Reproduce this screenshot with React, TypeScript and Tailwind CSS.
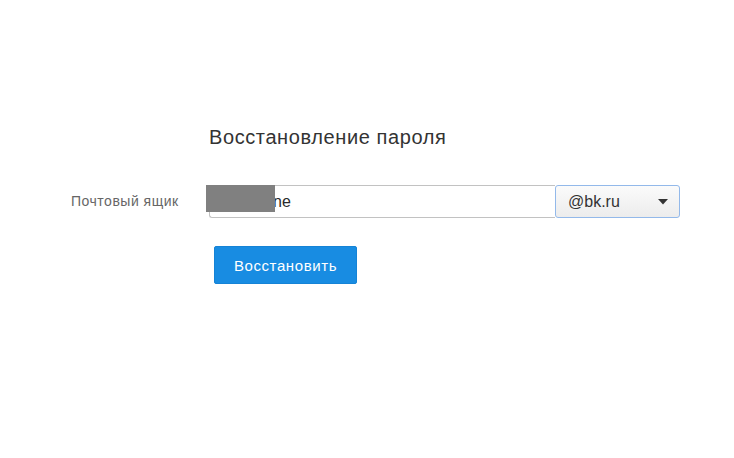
export default function App() {
  return (
    <div
      className="w-[734px] h-[458px] bg-white relative"
      style={{ fontFamily: '"Liberation Sans", Arial, sans-serif' }}
    >
      <div className="pt-[125px]">
        <div className="pl-[209px] text-[20px] leading-[24px] tracking-[0.6px] text-[#333333]">
          Восстановление пароля
        </div>
        <div className="flex items-center mt-[36px]">
          <div className="w-[209px] pl-[71px] text-[14px] tracking-[0.5px] text-[#666666] leading-[16px] -mt-[2px]">
            Почтовый ящик
          </div>
          <div className="flex relative">
            <div className="w-[346px] h-[33px] border border-[#c2c2c2] border-r-0 rounded-l-[3px] flex items-center pl-[63px] text-[16px] text-[#2a2a2a]">
              ne
            </div>
            <div className="w-[125px] h-[33px] border border-[#93b9ea] rounded-[3px] bg-gradient-to-b from-[#fbfbfb] to-[#ececec] flex items-center justify-between pl-[12px] pr-[11px] text-[16px] text-[#333]">
              <span>@bk.ru</span>
              <svg width="10" height="6" viewBox="0 0 10 6">
                <path d="M0 0 L10 0 L5 5.5 Z" fill="#333" />
              </svg>
            </div>
            <div className="absolute left-[-3px] top-0 w-[69px] h-[27px] bg-[#808080]" />
          </div>
        </div>
        <div className="pl-[214px] mt-[28px]">
          <button className="w-[143px] h-[38px] bg-[#188ce2] border border-[#1583d6] rounded-[2px] text-white text-[15px] tracking-[0.6px] leading-none">
            Восстановить
          </button>
        </div>
      </div>
    </div>
  );
}
